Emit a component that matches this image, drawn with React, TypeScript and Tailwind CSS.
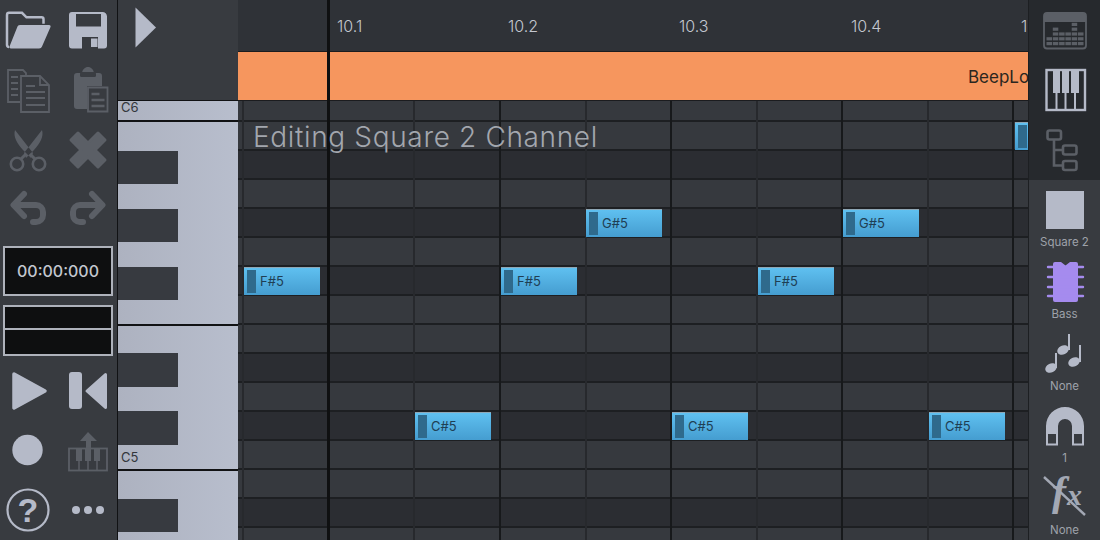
import React from "react";

const L = "#b5bac8";
const D = "#5b5f66";

const Svg = ({ children, s = 48 }: { children: React.ReactNode; s?: number }) => (
  <svg width={s} height={s} viewBox={`0 0 ${s} ${s}`} className="block overflow-visible">{children}</svg>
);

const Folder = () => (
  <Svg>
    <path d="M5 41c-1.3 0-2-1-2-2V9c0-1.5.8-2.2 2-2.2h13l4.5 4.5h15c1.500 0 2 .8 2 2v4.500" fill="none" stroke={L} strokeWidth="2.500" />
    <path d="M16 19h29c1.500 0 2 1 1.400 2.200L38 40.500c-.6 1.200-1.400 2-3 2H7c-1.500 0-2-1-1.400-2.200l7.600-19C13.800 19.800 14.500 19 16 19z" fill={L} />
  </Svg>
);
const Save = () => (
  <Svg>
    <path fillRule="evenodd" fill={L} d="M8 6H38.500a4.500 4.500 0 0 1 4.500 4.500V39.500a3 3 0 0 1-3 3H8a3 3 0 0 1-3-3V9a3 3 0 0 1 3-3zM12 8V20.500H37V8zM18 31V42.500H34V31z" />
    <rect x="27" y="32.500" width="6.500" height="8.500" fill={L} />
  </Svg>
);
const Copy = () => (
  <Svg>
    <g fill="none" stroke={D} strokeWidth="1.800">
      <path d="M16 36H4V4h15l3 3v2" />
      <path d="M17 10h19l9 9v27H17z" />
      <path d="M36 10v9h9" />
    </g>
    <g stroke={D} strokeWidth="2.200">
      <path d="M7 11h7M7 17h7M7 23h7M7 29h7" />
      <path d="M22 20h9M22 26h19M22 32h19M22 39h19" />
    </g>
  </Svg>
);
const Paste = () => (
  <Svg>
    <path fill={D} d="M13 7h5c.5-3.500 3-6 6-6s5.500 2.500 6 6h5c2 0 3 1 3 3v10H23v23H13c-2 0-3-1-3-3V10c0-2 1-3 3-3z" />
    <rect x="16" y="6" width="16" height="5" rx="1.500" fill="#3a3d42" />
    <path d="M24 21.500h19.500v24H24z" fill="none" stroke={D} strokeWidth="1.800" />
    <path d="M27.500 28h8M27.500 34h13M27.500 40h13" stroke={D} strokeWidth="2.400" />
  </Svg>
);
const Scissors = () => (
  <Svg>
    <path fill={D} d="M11 4L29 27l-2 5-8-8C13 17 9 11 11 4zM38 4L20 27l2 5 8-8c6-7 10-13 8-20z" />
    <circle cx="13" cy="38" r="6.200" fill="none" stroke={D} strokeWidth="2.600" />
    <circle cx="35" cy="38" r="6.200" fill="none" stroke={D} strokeWidth="2.600" />
    <path d="M17 33l5-5M31 33l-5-5" stroke={D} strokeWidth="3" />
  </Svg>
);
const Cross = () => (
  <Svg>
    <path fill={D} stroke={D} strokeWidth="3" strokeLinejoin="round" d="M14 7L24 17 34 7 41 14 31 24 41 34 34 41 24 31 14 41 7 34 17 24 7 14z" />
  </Svg>
);
const UndoPaths = () => (
  <>
    <path d="M20 10L9.500 21 20 32" fill="none" stroke={D} strokeWidth="6" strokeLinecap="round" strokeLinejoin="round" />
    <path d="M11 21H32a7 7 0 0 1 7 7v3a7 7 0 0 1-7 7H29" fill="none" stroke={D} strokeWidth="6" strokeLinecap="round" />
  </>
);
const Undo = () => <Svg><UndoPaths /></Svg>;
const Redo = () => <Svg><g transform="translate(48 0) scale(-1 1)"><UndoPaths /></g></Svg>;
const Play = () => (
  <Svg><path d="M10 7L41 24 10 41z" fill={L} stroke={L} strokeWidth="3.500" strokeLinejoin="round" /></Svg>
);
const SkipBack = () => (
  <Svg>
    <rect x="5" y="5" width="13" height="37" rx="3" fill={L} />
    <path d="M41.500 7.500L23 24l18.500 16.500z" fill={L} stroke={L} strokeWidth="3" strokeLinejoin="round" />
  </Svg>
);
const Record = () => <Svg><circle cx="23.500" cy="24" r="15.200" fill={L} /></Svg>;
const Midi = () => (
  <Svg>
    <path d="M24 6l9 9h-6v7h-5v-7h-6z" fill={D} />
    <rect x="5" y="22.500" width="38" height="22" fill="none" stroke={D} strokeWidth="1.800" />
    <path d="M12 23h6v12h-6zM21 23h6v12h-6zM30 23h6v12h-6z" fill={D} />
    <path d="M15 35v9M24 35v9M33 35v9" stroke={D} strokeWidth="1.500" />
  </Svg>
);
const Help = () => (
  <Svg>
    <circle cx="24" cy="24" r="20.500" fill="none" stroke={L} strokeWidth="2.200" />
    <text x="24" y="36" textAnchor="middle" fontSize="34" fontWeight="700" fill={L} fontFamily="'Liberation Sans', sans-serif">?</text>
  </Svg>
);
const Dots = () => (
  <Svg>
    <circle cx="12" cy="24" r="4" fill={L} />
    <circle cx="24" cy="24" r="4" fill={L} />
    <circle cx="36" cy="24" r="4" fill={L} />
  </Svg>
);

const Tracks = () => {
  const cols = [2, 4, 3, 3, 5, 3];
  return (
    <Svg>
      <rect x="3" y="7" width="42" height="35.500" rx="3" fill="none" stroke={D} strokeWidth="1.800" />
      <path d="M3 10a3 3 0 0 1 3-3h36a3 3 0 0 1 3 3v6H3z" fill={D} />
      {cols.map((n, c) =>
        Array.from({ length: n }).map((_, i) => (
          <rect key={`${c}-${i}`} x={5.500 + c * 6.300} y={36 - i * 4.800} width={5.500} height={3.200} fill={D} />
        ))
      )}
    </Svg>
  );
};
const PianoIcon = () => (
  <Svg>
    <rect x="5.500" y="4" width="38.500" height="40" fill="none" stroke={L} strokeWidth="2.400" />
    <path d="M12 4h7v23h-7zM21 4h7v23h-7zM30 4h8v23h-8z" fill={L} />
    <path d="M15.500 27v17M24.500 27v17M34 27v17" stroke={L} strokeWidth="2" />
  </Svg>
);
const Tree = () => (
  <Svg>
    <g fill="none" stroke={D} strokeWidth="2.600">
      <rect x="6.500" y="4.500" width="13.500" height="9" rx="2" />
      <rect x="22" y="19.500" width="13.500" height="9" rx="2" />
      <rect x="22" y="35" width="13.500" height="9" rx="2" />
      <path d="M13 14v25.500h9M13 24h9" />
    </g>
  </Svg>
);
const SquareIcon = () => <Svg s={44}><rect x="3" y="3" width="38" height="38" fill={L} /></Svg>;
const Chip = () => (
  <Svg s={44}>
    <path d="M12 2h6l4.500 3.500L27 2h6a2 2 0 0 1 2 2v36a2 2 0 0 1-2 2H12a2 2 0 0 1-2-2V4a2 2 0 0 1 2-2z" fill="#a58bee" />
    {[7, 17, 27, 36].map((y) => (
      <path key={y} d={`M5 ${y}h35`} stroke="#a58bee" strokeWidth="2.400" strokeLinecap="round" />
    ))}
  </Svg>
);
const Notes = () => (
  <Svg s={44}>
    {[[8, 36, 13, 21], [20, 18, 26, 2], [31, 30, 37, 13]].map(([x, y, sx, t]) => (
      <g key={x}>
        <ellipse cx={x} cy={y} rx="6" ry="4.500" transform={`rotate(-25 ${x} ${y})`} fill={L} />
        <path d={`M${sx} ${y}V${t}`} stroke={L} strokeWidth="2" />
      </g>
    ))}
  </Svg>
);
const Magnet = () => (
  <Svg s={44}>
    <path d="M3 29V22a19 19 0 0 1 38 0v7H29V22a7 7 0 0 0-14 0v7z" fill={L} />
    <rect x="4" y="29" width="10" height="11.500" fill="none" stroke={L} strokeWidth="2" />
    <rect x="30" y="29" width="10" height="11.500" fill="none" stroke={L} strokeWidth="2" />
  </Svg>
);
const Fx = () => (
  <Svg s={44}>
    <text x="9" y="29" fontWeight="700" fontStyle="italic" fill="#a3a8b4" fontFamily="'Liberation Serif', serif">
      <tspan fontSize="42">f</tspan>
      <tspan fontSize="30" dx="1">x</tspan>
    </text>
    <path d="M1 1L42 39" stroke="#a3a8b4" strokeWidth="2.400" />
  </Svg>
);

const LeftRow = ({ a, b, h }: { a: React.ReactNode; b: React.ReactNode; h: string }) => (
  <div className={`grid grid-cols-[56px_60px] gap-x-[2px] items-center justify-items-center ${h}`}>
    <div>{a}</div>
    <div>{b}</div>
  </div>
);

const Sidebar = () => (
  <div className="w-[117px] h-full shrink-0 bg-[#383b40] flex flex-col">
    <div className="h-[59px]"><LeftRow h="h-full" a={<Folder />} b={<Save />} /></div>
    <div className="h-[61px]"><LeftRow h="h-full" a={<Copy />} b={<Paste />} /></div>
    <div className="h-[60px]"><LeftRow h="h-full" a={<Scissors />} b={<Cross />} /></div>
    <div className="h-[56px]"><LeftRow h="h-full" a={<Undo />} b={<Redo />} /></div>
    <div className="mt-[10px] ml-[3px] w-[110px] h-[50px] border-2 border-[#aeb2bb] bg-[#0e0f10] flex items-center justify-center text-[16px] font-medium text-[#c3c7cf]">00:00:000</div>
    <div className="mt-[9px] ml-[3px] w-[110px] h-[51px] border-2 border-[#aeb2bb] bg-[#0e0f10] flex flex-col">
      <div className="h-[23px] border-b-2 border-[#aeb2bb]" />
    </div>
    <div className="mt-[5px] h-[59px]"><LeftRow h="h-full" a={<Play />} b={<SkipBack />} /></div>
    <div className="h-[60px]"><LeftRow h="h-full" a={<Record />} b={<Midi />} /></div>
    <div className="h-[60px]"><LeftRow h="h-full" a={<Help />} b={<Dots />} /></div>
  </div>
);

const Black = ({ mt, h }: { mt: string; h: string }) => (
  <div className={`w-[60px] bg-[#373a40] shrink-0 ${mt} ${h}`} />
);

const Piano = () => (
  <div className="w-[121px] h-full shrink-0 border-l border-[#111214] bg-[#383b40] flex flex-col">
    <div className="h-[101px] shrink-0 pl-[17px] pt-[7px] border-b border-[#111214]">
      <svg width="22" height="41" viewBox="0 0 22 41" className="block">
        <path d="M0.500 0.500L21 20.500 0.500 40.500z" fill={L} />
      </svg>
    </div>
    <div className="flex-1 bg-linear-to-r from-[#adb2c0] to-[#b8becd] flex flex-col overflow-hidden text-[13px] leading-none text-[#33363c]">
      <div className="h-[21px] shrink-0 pl-[3px] border-b-2 border-[#111214]">C6</div>
      <Black mt="mt-[29px]" h="h-[33px]" />
      <Black mt="mt-[25px]" h="h-[33px]" />
      <Black mt="mt-[25px]" h="h-[33px]" />
      <div className="mt-[24px] h-[2px] shrink-0 bg-[#111214]" />
      <Black mt="mt-[27px]" h="h-[34px]" />
      <Black mt="mt-[24px]" h="h-[34px]" />
      <div className="mt-[24px] h-[2px] shrink-0 bg-[#111214] relative">
        <span className="absolute left-[3px] bottom-[7px]">C5</span>
      </div>
      <Black mt="mt-[28px]" h="h-[33px]" />
    </div>
  </div>
);

const rows: { h: number; dark: boolean }[] = [
  { h: 21, dark: false },
  ...[false, true, false, true, false, true, false, false, true, false, true, false, false, true, false].map((dark) => ({ h: 29, dark })),
];
const vlines = [
  { x: 4, strong: false },
  { x: 175, strong: false },
  { x: 261, strong: true },
  { x: 347, strong: false },
  { x: 432, strong: true },
  { x: 518, strong: false },
  { x: 603, strong: true },
  { x: 689, strong: false },
  { x: 774, strong: true },
];
const notes = [
  { x: 6, y: 166, t: "F#5" },
  { x: 263, y: 166, t: "F#5" },
  { x: 520, y: 166, t: "F#5" },
  { x: 348, y: 108, t: "G#5" },
  { x: 605, y: 108, t: "G#5" },
  { x: 177, y: 311, t: "C#5" },
  { x: 434, y: 311, t: "C#5" },
  { x: 691, y: 311, t: "C#5" },
  { x: 777, y: 21, t: "" },
];

const Note = ({ x, y, t }: { x: number; y: number; t: string }) => (
  <div
    className="absolute w-[76px] h-[28px] border-t border-[#8fa7b5] bg-linear-to-b from-[#5fc0f0] to-[#459dd0] flex items-center pl-[3px]"
    style={{ left: x, top: y }}
  >
    <div className="w-[9px] h-[23px] bg-[#2f6a8c] shrink-0" />
    <span className="ml-[4px] text-[13px] text-[#1f3f54]">{t}</span>
  </div>
);

const Main = () => (
  <div className="w-[790px] h-full shrink-0 relative overflow-hidden flex flex-col">
    <div className="h-[51px] shrink-0 bg-[#2f3237] flex text-[16px] font-light text-[#c3c7cf]">
      <div className="w-[99px] shrink-0" />
      <div className="w-[171px] shrink-0 leading-[52px]">10.1</div>
      <div className="w-[171px] shrink-0 leading-[52px]">10.2</div>
      <div className="w-[172px] shrink-0 leading-[52px]">10.3</div>
      <div className="w-[170px] shrink-0 leading-[52px]">10.4</div>
      <div className="shrink-0 leading-[52px]">1</div>
    </div>
    <div className="h-[50px] shrink-0 border-y border-[#1b1c1f] bg-[#f6965e] relative text-[17px] text-[#2a2620]">
      <span className="absolute left-[730px] top-[13px] whitespace-nowrap">BeepLoop</span>
    </div>
    <div className="flex-1 relative overflow-hidden">
      <div className="flex flex-col">
        {rows.map((r, i) => (
          <div
            key={i}
            className={`shrink-0 border-b-2 border-[#1d1f22] ${r.dark ? "bg-[#2b2d32]" : "bg-[#36393e]"}`}
            style={{ height: r.h }}
          />
        ))}
      </div>
      {vlines.map((v) => (
        <div
          key={v.x}
          className={`absolute top-0 bottom-0 w-[2px] ${v.strong ? "bg-[#17191b]" : "bg-[#27292d]"}`}
          style={{ left: v.x }}
        />
      ))}
      {notes.map((n, i) => (
        <Note key={i} {...n} />
      ))}
    </div>
    <div className="absolute left-[89px] top-0 bottom-0 w-[3px] bg-[#0f1011]" />
    <div className="absolute left-[15px] top-[117px] text-[28px] font-light leading-[40px] tracking-[0.65px] whitespace-nowrap text-[#a3a7ae]">
      Editing Square 2 Channel
    </div>
  </div>
);

const RightItem = ({ icon, label }: { icon: React.ReactNode; label: string }) => (
  <div className="h-[72px] shrink-0 flex flex-col items-center pt-[8px]">
    {icon}
    <div className="mt-[3px] text-[11.500px] leading-[14px] text-[#9ea2aa]">{label}</div>
  </div>
);

const Right = () => (
  <div className="flex-1 h-full flex flex-col bg-[#383b40] border-l border-[#1d1f22] overflow-hidden">
    <div className="h-[180px] shrink-0 bg-[#26292d] flex flex-col items-center">
      <div className="h-[59px] flex items-center"><Tracks /></div>
      <div className="h-[61px] flex items-center"><PianoIcon /></div>
      <div className="h-[60px] flex items-center"><Tree /></div>
    </div>
    <RightItem icon={<SquareIcon />} label="Square 2" />
    <RightItem icon={<Chip />} label="Bass" />
    <RightItem icon={<Notes />} label="None" />
    <RightItem icon={<Magnet />} label="1" />
    <RightItem icon={<Fx />} label="None" />
  </div>
);

export default function App() {
  return (
    <div className="w-[1100px] h-[540px] flex overflow-hidden bg-[#383b40] font-['Inter','Noto_Sans',sans-serif]">
      <Sidebar />
      <Piano />
      <Main />
      <Right />
    </div>
  );
}
